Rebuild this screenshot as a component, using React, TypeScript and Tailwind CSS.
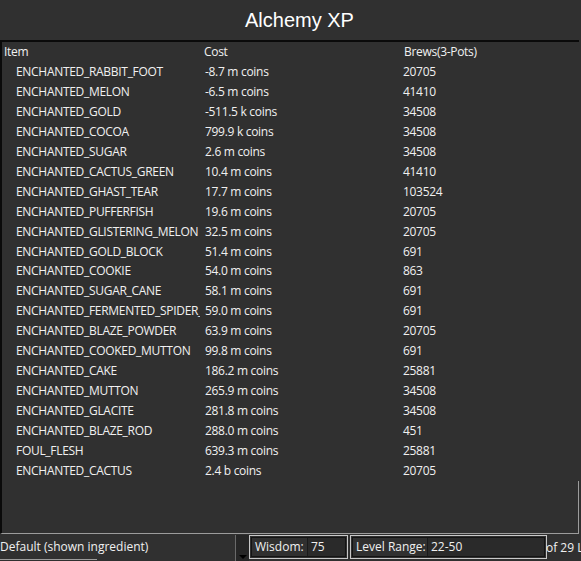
const rows: [string, string, string][] = [
  ['ENCHANTED_RABBIT_FOOT', '-8.7 m coins', '20705'],
  ['ENCHANTED_MELON', '-6.5 m coins', '41410'],
  ['ENCHANTED_GOLD', '-511.5 k coins', '34508'],
  ['ENCHANTED_COCOA', '799.9 k coins', '34508'],
  ['ENCHANTED_SUGAR', '2.6 m coins', '34508'],
  ['ENCHANTED_CACTUS_GREEN', '10.4 m coins', '41410'],
  ['ENCHANTED_GHAST_TEAR', '17.7 m coins', '103524'],
  ['ENCHANTED_PUFFERFISH', '19.6 m coins', '20705'],
  ['ENCHANTED_GLISTERING_MELON', '32.5 m coins', '20705'],
  ['ENCHANTED_GOLD_BLOCK', '51.4 m coins', '691'],
  ['ENCHANTED_COOKIE', '54.0 m coins', '863'],
  ['ENCHANTED_SUGAR_CANE', '58.1 m coins', '691'],
  ['ENCHANTED_FERMENTED_SPIDER_EYE', '59.0 m coins', '691'],
  ['ENCHANTED_BLAZE_POWDER', '63.9 m coins', '20705'],
  ['ENCHANTED_COOKED_MUTTON', '99.8 m coins', '691'],
  ['ENCHANTED_CAKE', '186.2 m coins', '25881'],
  ['ENCHANTED_MUTTON', '265.9 m coins', '34508'],
  ['ENCHANTED_GLACITE', '281.8 m coins', '34508'],
  ['ENCHANTED_BLAZE_ROD', '288.0 m coins', '451'],
  ['FOUL_FLESH', '639.3 m coins', '25881'],
  ['ENCHANTED_CACTUS', '2.4 b coins', '20705'],
]

export default function App() {
  return (
    <div className="w-[581px] h-[561px] overflow-hidden bg-[#303030] text-[#f0f0f0] flex flex-col" style={{ fontFamily: '"Open Sans", "Noto Sans", sans-serif' }}>
      {/* title */}
      <div className="h-[40px] flex items-center justify-center pl-[18px] shrink-0">
        <h1 className="text-[20px] leading-none text-white" style={{ fontFamily: '"Liberation Sans", Arial, sans-serif' }}>Alchemy XP</h1>
      </div>

      {/* table */}
      <div className="flex-1 flex flex-col mr-[2px] border-t-2 border-l-2 border-t-[#0a0a0a] border-l-[#0a0a0a] border-b border-b-[#9c9c9c] min-h-0">
        <div className="flex h-[20px] items-center text-[12px] tracking-[-0.3px] pl-[2px]">
          <div className="w-[200px]">Item</div>
          <div className="w-[200px]">Cost</div>
          <div>Brews(3-Pots)</div>
        </div>
        {rows.map(([item, cost, brews]) => (
          <div key={item} className="flex h-[20px] items-center text-[12px] tracking-[-0.3px] whitespace-nowrap">
            <div className="w-[198px] pl-[14px] overflow-hidden shrink-0">{item}</div>
            <div className="w-[202px] pl-[5px] shrink-0">{cost}</div>
            <div className="pl-[1px]">{brews}</div>
          </div>
        ))}
        <div className="flex-1 flex justify-end items-end">
          <div className="w-px h-[52px] bg-[#9c9c9c]" />
        </div>
      </div>

      {/* bottom bar */}
      <div className="h-[27px] shrink-0 flex items-stretch text-[12px] pt-[1px] whitespace-nowrap">
        <div className="w-[235px] shrink-0 flex flex-col">
          <div className="flex-1 flex items-center">Default (shown ingredient)</div>
          <div className="h-px w-[97px] bg-[#9c9c9c] mb-[1px]" />
        </div>
        <div className="w-[14px] shrink-0 bg-[#262626] border-l border-[#6a6a6a] flex flex-col items-center justify-end pb-[2px]">
          <div className="w-0 h-0 border-l-[4px] border-r-[4px] border-t-[4px] border-l-transparent border-r-transparent border-t-black" />
        </div>
        <div className="w-[99px] shrink-0 border border-[#c8c8c8] p-px mb-[2px]">
          <div className="h-full border border-[#141414] flex items-center">
            <span className="block shrink-0 pl-[3px] w-[55px]">Wisdom:</span>
            <div className="flex-1 h-full bg-[#2a2a2a] border-l border-[#1a1a1a] flex items-center pl-[3px]">75</div>
          </div>
        </div>
        <div className="w-[2px] shrink-0" />
        <div className="w-[197px] shrink-0 border border-[#c8c8c8] p-px mb-[2px]">
          <div className="h-full border border-[#141414] flex items-center">
            <span className="block shrink-0 pl-[3px] w-[74px]">Level Range:</span>
            <div className="flex-1 h-full bg-[#2a2a2a] border-l border-[#1a1a1a] flex items-center pl-[3px]">22-50</div>
          </div>
        </div>
        <div className="flex-1 min-w-0 overflow-hidden flex items-center -ml-[1px]">of 29 Levels</div>
      </div>
    </div>
  )
}
